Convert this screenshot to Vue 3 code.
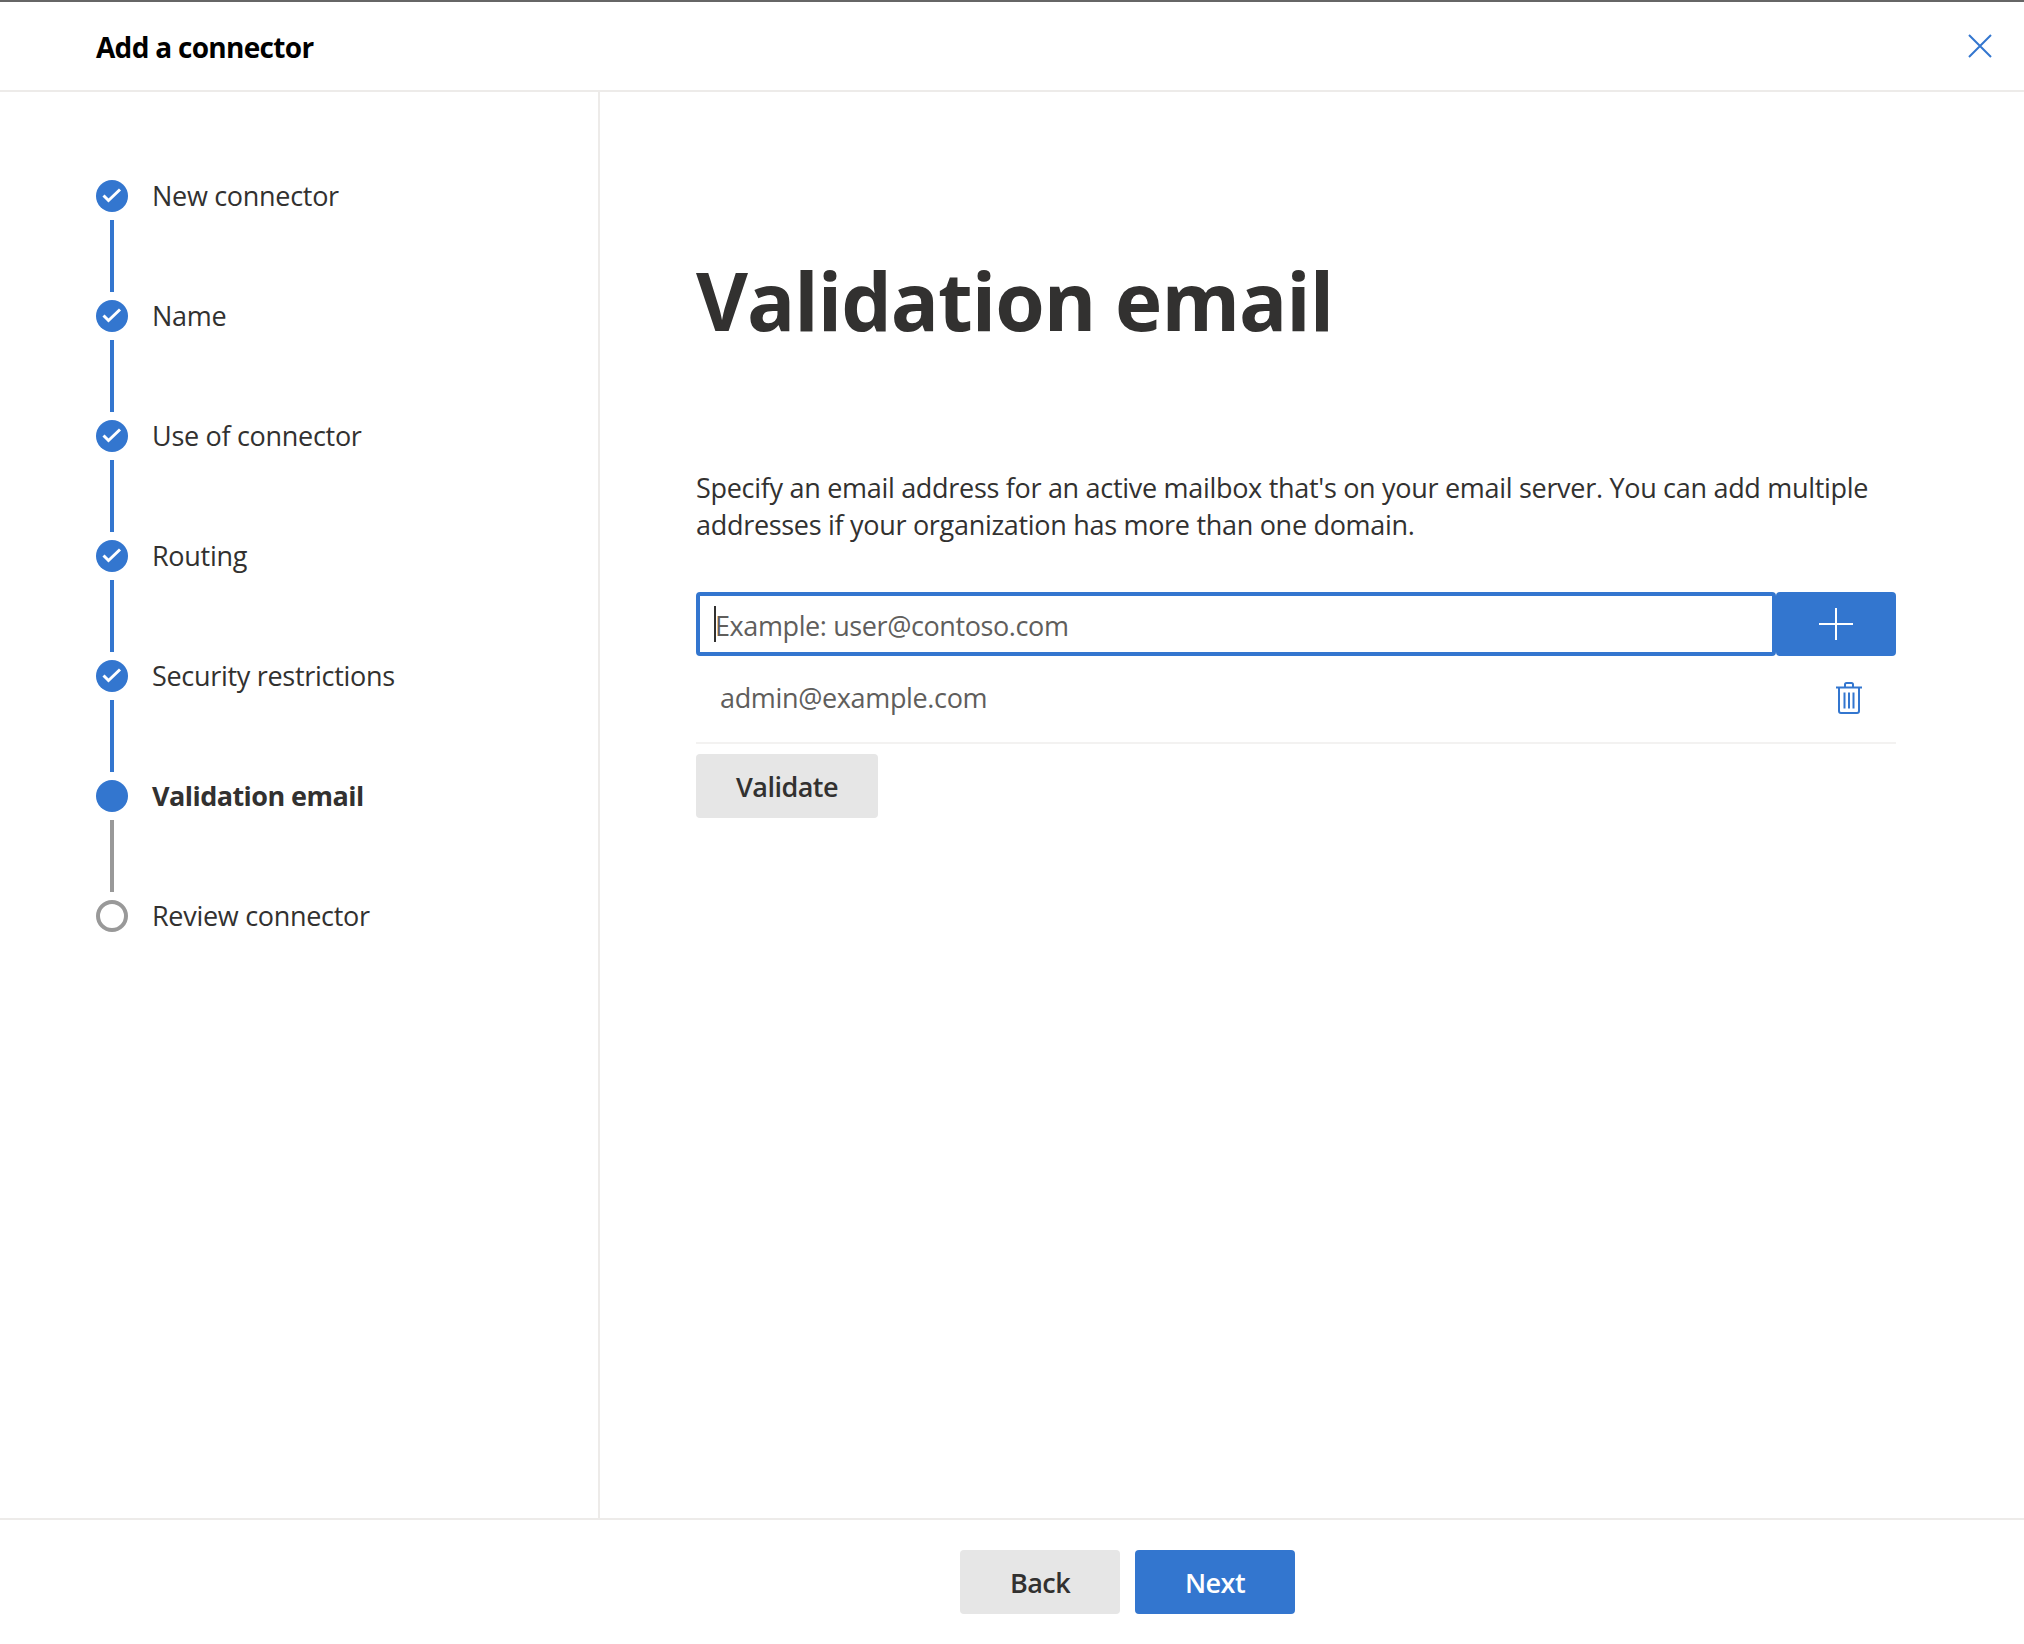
<template>
  <div class="page">
    <header class="top">
      <h2 class="title">Add a connector</h2>
      <button class="close" aria-label="Close">
        <svg width="24" height="24" viewBox="0 0 24 24"><path d="M1 1 23 23M23 1 1 23" stroke="#3376cf" stroke-width="2" fill="none"/></svg>
      </button>
    </header>
    <div class="body">
      <aside class="side">
        <div v-for="(s, i) in steps" :key="s.label" class="step">
          <div class="rail">
            <span class="dot" :class="s.state">
              <svg v-if="s.state === 'done'" width="32" height="32" viewBox="0 0 32 32"><path d="M7.500 15.500 12.500 20.500 24 9.500" stroke="#fff" stroke-width="3" fill="none"/></svg>
            </span>
            <span v-if="i < steps.length - 1" class="line" :class="{ grey: s.state === 'current' }"></span>
          </div>
          <span class="label" :class="{ bold: s.state === 'current' }">{{ s.label }}</span>
        </div>
      </aside>
      <main class="main">
        <h1 class="heading">Validation email</h1>
        <p class="desc">Specify an email address for an active mailbox that's on your email server. You can add multiple addresses if your organization has more than one domain.</p>
        <div class="inputrow">
          <div class="field"><span class="caret"></span><span class="ph">Example: user@contoso.com</span></div>
          <button class="add" aria-label="Add">
            <svg width="34" height="34" viewBox="0 0 34 34"><path d="M0 17H34M17 1V33" stroke="#fff" stroke-width="2" fill="none"/></svg>
          </button>
        </div>
        <div class="entry">
          <span class="addr">admin@example.com</span>
          <svg class="trash" width="28" height="32" viewBox="0 0 28 32"><path d="M1 5.500H27M10 5V2.500Q10 1 11.500 1H16.500Q18 1 18 2.500V5M4 6V29Q4 31 6 31H22Q24 31 24 29V6M9.500 10.500V26.500M14 10.500V26.500M18.500 10.500V26.500" stroke="#3376cf" stroke-width="2" fill="none"/></svg>
        </div>
        <button class="btn grey validate">Validate</button>
      </main>
    </div>
    <footer class="foot">
      <button class="btn grey">Back</button>
      <button class="btn blue">Next</button>
    </footer>
  </div>
</template>

<script setup>
const steps = [
  { label: 'New connector', state: 'done' },
  { label: 'Name', state: 'done' },
  { label: 'Use of connector', state: 'done' },
  { label: 'Routing', state: 'done' },
  { label: 'Security restrictions', state: 'done' },
  { label: 'Validation email', state: 'current' },
  { label: 'Review connector', state: 'todo' },
]
</script>

<style>
html, body { margin: 0; background: #fff; }
</style>

<style scoped>
.page {
  width: 2024px; height: 1644px; display: flex; flex-direction: column; box-sizing: border-box;
  border-top: 2px solid #666; font-family: "Open Sans", "Noto Sans", sans-serif; color: #323130; background: #fff;
}
.top {
  height: 90px; box-sizing: border-box; border-bottom: 2px solid #edebe9; display: flex; align-items: center;
  justify-content: space-between; padding: 0 32px 0 96px;
}
.title { margin: 1px 0 0; font-size: 28px; font-weight: 700; color: #000; letter-spacing: -0.7px; }
.close { border: 0; background: none; padding: 0; display: flex; }
.body { flex: 1; display: flex; min-height: 0; }
.side { width: 600px; box-sizing: border-box; border-right: 2px solid #edebe9; padding: 88px 0 0 96px; }
.step { display: flex; gap: 24px; }
.rail { width: 32px; display: flex; flex-direction: column; align-items: center; gap: 8px; padding-bottom: 8px; }
.dot { width: 32px; height: 32px; border-radius: 50%; background: #3376cf; box-sizing: border-box; display: block; }
.dot svg { display: block; }
.dot.todo { background: #fff; border: 4px solid #999; }
.line { width: 4px; height: 72px; background: #3376cf; display: block; }
.line.grey { background: #999; }
.label { font-size: 27px; line-height: 32px; letter-spacing: -0.3px; }
.label.bold { font-weight: 700; letter-spacing: -0.55px; }
.main { flex: 1; padding: 0 128px 0 96px; }
.heading { margin: 0; padding-top: 162px; font-size: 80px; line-height: 92px; font-weight: 700; color: #323130; letter-spacing: -1px; }
.desc { margin: 123px 0 0; font-size: 27px; line-height: 37px; letter-spacing: -0.3px; }
.inputrow { display: flex; height: 64px; margin-top: 49px; }
.field { width: 1080px; box-sizing: border-box; border: 4px solid #3376cf; border-radius: 4px; display: flex; align-items: center; padding-left: 14px; }
.caret { width: 2px; height: 36px; background: #323130; }
.ph { font-size: 27px; color: #605e5c; letter-spacing: -0.4px; margin: 2px 0 0 -1px; }
.add { width: 120px; border: 0; background: #3376cf; border-radius: 4px; padding: 0; display: flex; align-items: center; justify-content: center; }
.entry { height: 88px; box-sizing: border-box; border-bottom: 2px solid #f3f2f1; display: flex; align-items: center; justify-content: space-between; padding: 0 33px 4px 24px; }
.addr { font-size: 27px; color: #605e5c; letter-spacing: -0.35px; }
.trash { display: block; margin-top: 1px; }
.btn { width: 160px; height: 64px; border: 0; border-radius: 4px; font-family: inherit; font-size: 27px; font-weight: 600; padding: 0; letter-spacing: -0.55px; }
.btn.grey { background: #e6e6e6; color: #323130; }
.btn.blue { background: #3376cf; color: #fff; }
.validate { width: 182px; margin-top: 10px; display: block; }
.foot { height: 126px; box-sizing: border-box; border-top: 2px solid #edebe9; display: flex; align-items: flex-start; gap: 15px; padding: 30px 0 0 960px; }
</style>
